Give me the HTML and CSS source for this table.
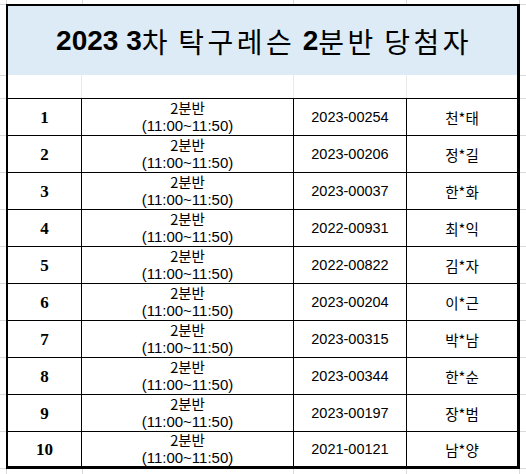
FILE: index.html
```html
<!DOCTYPE html>
<html lang="ko">
<head>
<meta charset="utf-8">
<title>2023 3차 탁구레슨 2분반 당첨자</title>
<link rel="stylesheet" href="styles.css">
</head>
<body>
<div class="sheet">
  <div class="board">
    <div class="title"><span class="num">2023 3</span>차 탁구레슨 <span class="num">2</span>분반 당첨자</div>
    <div class="spacer"><span></span><span></span><span></span><span></span></div>
    <div class="row"><div class="c no">1</div><div class="c slot"><span class="ko">2분반</span><span class="time">(11:00~11:50)</span></div><div class="c id">2023-00254</div><div class="c name">천*태</div></div>
    <div class="row"><div class="c no">2</div><div class="c slot"><span class="ko">2분반</span><span class="time">(11:00~11:50)</span></div><div class="c id">2023-00206</div><div class="c name">정*길</div></div>
    <div class="row"><div class="c no">3</div><div class="c slot"><span class="ko">2분반</span><span class="time">(11:00~11:50)</span></div><div class="c id">2023-00037</div><div class="c name">한*화</div></div>
    <div class="row"><div class="c no">4</div><div class="c slot"><span class="ko">2분반</span><span class="time">(11:00~11:50)</span></div><div class="c id">2022-00931</div><div class="c name">최*익</div></div>
    <div class="row"><div class="c no">5</div><div class="c slot"><span class="ko">2분반</span><span class="time">(11:00~11:50)</span></div><div class="c id">2022-00822</div><div class="c name">김*자</div></div>
    <div class="row"><div class="c no">6</div><div class="c slot"><span class="ko">2분반</span><span class="time">(11:00~11:50)</span></div><div class="c id">2023-00204</div><div class="c name">이*근</div></div>
    <div class="row"><div class="c no">7</div><div class="c slot"><span class="ko">2분반</span><span class="time">(11:00~11:50)</span></div><div class="c id">2023-00315</div><div class="c name">박*남</div></div>
    <div class="row"><div class="c no">8</div><div class="c slot"><span class="ko">2분반</span><span class="time">(11:00~11:50)</span></div><div class="c id">2023-00344</div><div class="c name">한*순</div></div>
    <div class="row"><div class="c no">9</div><div class="c slot"><span class="ko">2분반</span><span class="time">(11:00~11:50)</span></div><div class="c id">2023-00197</div><div class="c name">장*범</div></div>
    <div class="row"><div class="c no">10</div><div class="c slot"><span class="ko">2분반</span><span class="time">(11:00~11:50)</span></div><div class="c id">2021-00121</div><div class="c name">남*양</div></div>
  </div>
</div>
</body>
</html>
```

FILE: styles.css
```css
html, body {
  margin: 0;
  padding: 0;
}

body {
  width: 526px;
  height: 474px;
  overflow: hidden;
  font-family: "Noto Sans CJK KR", "Noto Sans", sans-serif;
  color: #000;
  background:
    linear-gradient(#d9d9d9, #d9d9d9) 6px 0 / 1px 100% no-repeat,
    linear-gradient(#d9d9d9, #d9d9d9) 82px 0 / 1px 100% no-repeat,
    linear-gradient(#d9d9d9, #d9d9d9) 293px 0 / 1px 100% no-repeat,
    linear-gradient(#d9d9d9, #d9d9d9) 406px 0 / 1px 100% no-repeat,
    linear-gradient(#d9d9d9, #d9d9d9) 519px 0 / 1px 100% no-repeat,
    linear-gradient(#d9d9d9, #d9d9d9) 0 4px / 100% 1px no-repeat,
    linear-gradient(#d9d9d9, #d9d9d9) 0 75px / 100% 1px no-repeat,
    linear-gradient(#d9d9d9, #d9d9d9) 0 468px / 100% 1px no-repeat,
    repeating-linear-gradient(to bottom, #d9d9d9 0 1px, transparent 1px 37px) 0 98px / 100% 334px no-repeat,
    #fff;
}

.sheet {
  padding: 4px 0 0 6px;
}

.board {
  width: 509px;
  border-style: solid;
  border-color: #000;
  border-width: 2px 3px 3px 2px;
  background: #fff;
}

.title {
  height: 69px;
  background: #ddebf7;
  display: flex;
  align-items: center;
  justify-content: center;
  font-size: 28px;
  line-height: 1;
  letter-spacing: 3.5px;
  word-spacing: -4px;
  white-space: pre;
  padding-left: 3px;
}

.num {
  font-family: "Liberation Sans", Arial, sans-serif;
  font-weight: 700;
  letter-spacing: 0;
  word-spacing: 0;
}

.spacer {
  display: grid;
  grid-template-columns: 74px 212px 113px 110px;
  height: 23px;
}

.spacer span {
  border-right: 1px solid #e8ece8;
}

.spacer span:last-child {
  border-right: 0;
}

.row {
  display: grid;
  grid-template-columns: 74px 212px 113px 110px;
  height: 37px;
  box-sizing: border-box;
  border-top: 1px solid #000;
}

.row:last-child {
  height: 35px;
}

.c {
  border-right: 1px solid #000;
  display: flex;
  align-items: center;
  justify-content: center;
  font-size: 14.5px;
  line-height: 17px;
}

.c:last-child {
  border-right: 0;
}

.no {
  font-family: "Liberation Serif", "Times New Roman", serif;
  font-weight: 700;
  font-size: 17px;
}

.id {
  font-family: "Liberation Sans", Arial, sans-serif;
}

.slot {
  flex-direction: column;
  gap: 1px;
}

.ko {
  line-height: 16px;
}

.time {
  font-family: "Liberation Sans", Arial, sans-serif;
  font-size: 15px;
  line-height: 17px;
}
```
